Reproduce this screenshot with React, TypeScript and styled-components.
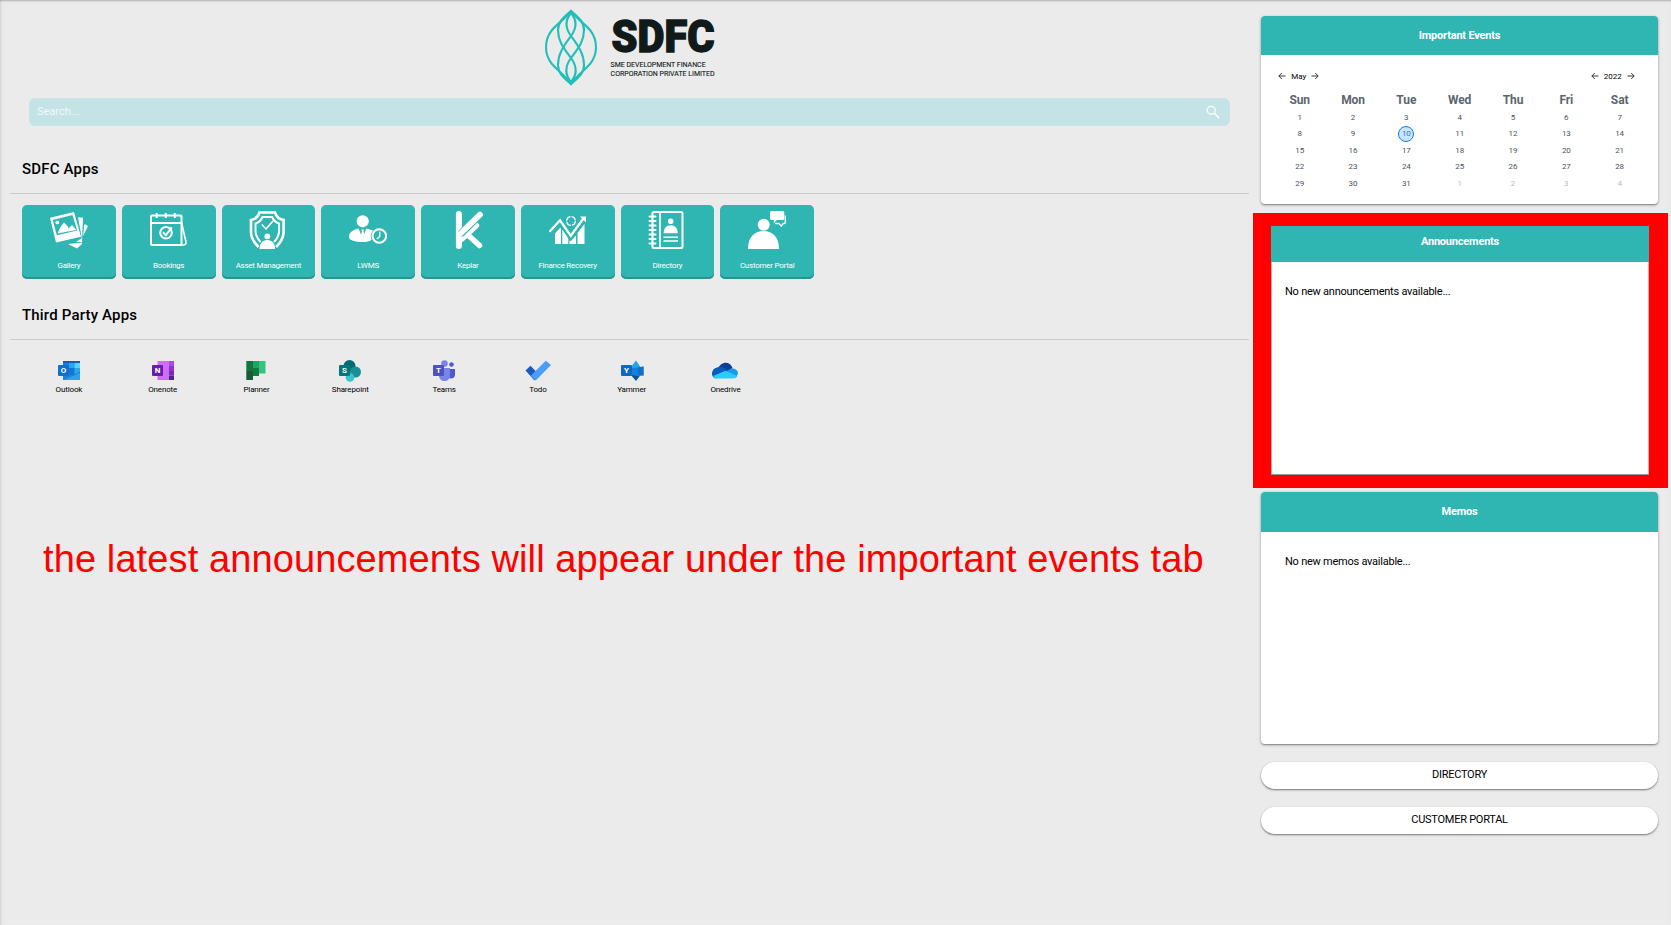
import React from "react";
import styled, { createGlobalStyle, css } from "styled-components";

const teal = "#2fb5b2";

const GlobalStyle = createGlobalStyle`
  *, *::before, *::after { box-sizing: border-box; }
  body {
    margin: 0;
    background: #ebebeb;
    font-family: Roboto, "Liberation Sans", sans-serif;
    color: #000;
    overflow: hidden;
  }
`;

const Page = styled.div`
  display: flex;
  width: 1671px;
  height: 925px;
  background: #ebebeb;
  box-shadow: inset 0 2px 2px -1px rgba(0, 0, 0, 0.25), inset 3px 0 3px -2px rgba(0, 0, 0, 0.1);
`;

const Main = styled.main`
  width: 1249px;
  padding: 10px 0 0 10px;
  display: flex;
  flex-direction: column;
`;

const LogoRow = styled.header`
  height: 88px;
  padding-left: 534px;
  svg { display: block; overflow: visible; }
`;

const SearchBar = styled.label`
  display: flex;
  align-items: center;
  justify-content: space-between;
  height: 28px;
  margin: 0 19px;
  padding: 0 9px 0 7px;
  border: 1px solid #c7e4e7;
  border-radius: 6px;
  background: #c4e3e6;
  svg { display: block; }
`;

const SearchInput = styled.input`
  flex: 1;
  border: 0;
  padding: 0 0 2px;
  outline: 0;
  background: transparent;
  font: 400 11px Roboto, sans-serif;
  &::placeholder { color: #f0f8f9; opacity: 1; }
`;

const SectionTitle = styled.h2<{ $first?: boolean }>`
  margin: 0;
  height: ${(p) => (p.$first ? 68 : 61)}px;
  padding: ${(p) => (p.$first ? 33 : 26)}px 0 0 12px;
  border-bottom: 1px solid #cbcbcb;
  font-size: 15px;
  line-height: 20px;
  font-weight: 500;
  letter-spacing: 0.18px;
`;

const AppGrid = styled.div`
  display: grid;
  grid-template-columns: repeat(8, 93.75px);
  column-gap: 6px;
  padding: 11px 0 0 12px;
`;

const AppCard = styled.a`
  display: flex;
  flex-direction: column;
  align-items: center;
  height: 74px;
  padding-top: 6px;
  border-radius: 5px;
  background: ${teal};
  box-shadow: inset 0 -2px 0 #279592;
  color: #fff;
  font-size: 8px;
  line-height: 10px;
  letter-spacing: -0.25px;
  white-space: nowrap;
  svg { display: block; margin-bottom: 12px; }
`;

const ThirdPartyRow = styled.div`
  display: grid;
  grid-template-columns: repeat(8, 93.8px);
  padding: 20px 0 0 12px;
`;

const ThirdPartyApp = styled.a`
  display: flex;
  flex-direction: column;
  align-items: center;
  font-size: 8px;
  line-height: 10px;
  letter-spacing: -0.15px;
  svg { display: block; margin-bottom: 3px; }
`;

const Note = styled.p`
  margin: 142px 0 0 33px;
  font: 400 38px/44px "Liberation Sans", Arial, sans-serif;
  letter-spacing: 0.11px;
  color: #f00;
  white-space: nowrap;
`;

const Side = styled.aside`
  width: 415px;
  margin-left: 4px;
  padding-top: 16px;
  display: flex;
  flex-direction: column;
`;

const Panel = styled.section<{ $height: number; $flat?: boolean }>`
  height: ${(p) => p.$height}px;
  margin: 0 10px 0 8px;
  border-radius: 4px;
  overflow: hidden;
  background: #fff;
  box-shadow: 0 1px 3px rgba(0, 0, 0, 0.35), 0 1px 1px rgba(0, 0, 0, 0.2);
  ${(p) =>
    p.$flat &&
    css`
      margin: 0;
      border-radius: 0;
      box-shadow: inset 0 -1px 0 #999, inset 1px 0 0 #e9a9a9, inset -1px 0 0 #e9a9a9;
    `}
`;

const PanelHeader = styled.h3<{ $height: number; $pad: number }>`
  margin: 0;
  height: ${(p) => p.$height}px;
  padding-top: ${(p) => p.$pad}px;
  background: ${teal};
  color: #fff;
  font-size: 11px;
  line-height: 14px;
  font-weight: 700;
  letter-spacing: -0.2px;
  text-align: center;
`;

const PanelText = styled.p<{ $left: number }>`
  margin: 23px 0 0 ${(p) => p.$left}px;
  font-size: 11px;
  line-height: 14px;
  letter-spacing: -0.24px;
`;

const Highlight = styled.div`
  height: 275px;
  margin: 9px 0 4px;
  padding: 13px 19px 0 18px;
  background: #f00;
`;

const CalendarNav = styled.div`
  display: flex;
  justify-content: space-between;
  padding: 15px 23px 0 17px;
  height: 35px;
`;

const Stepper = styled.div`
  display: flex;
  align-items: center;
  height: 12px;
  gap: 5.2px;
  font-size: 8px;
  svg { display: block; }
`;

const Calendar = styled.div`
  display: grid;
  grid-template-columns: repeat(7, 53.33px);
  grid-template-rows: 19px repeat(5, 16.5px);
  padding-left: 12px;
  justify-items: center;
  align-items: center;
`;

const Weekday = styled.span`
  color: #5b6670;
  font-size: 12px;
  line-height: 16px;
  font-weight: 700;
  letter-spacing: -0.1px;
`;

const Day = styled.span<{ $today?: boolean; $muted?: boolean }>`
  display: flex;
  align-items: center;
  justify-content: center;
  width: 16px;
  height: 16px;
  border-radius: 50%;
  font-size: 8px;
  letter-spacing: -0.1px;
  color: ${(p) => (p.$muted ? "#bdbdbd" : "#4a545d")};
  ${(p) =>
    p.$today &&
    css`
      color: #2b7cc4;
      background: #cce4fb;
      border: 1px solid #0a7ee6;
    `}
`;

const LinkButton = styled.button`
  height: 27px;
  margin: 18px 10px 0 8px;
  padding: 0 0 3px;
  border: 0;
  border-radius: 14px;
  background: #fff;
  box-shadow: 0 1px 2px rgba(0, 0, 0, 0.5);
  font: 400 11px Roboto, sans-serif;
  letter-spacing: -0.25px;
  color: #000;
`;

const Logo = () => (
  <svg width="180" height="78" viewBox="0 0 180 78">
    <g fill="none" stroke="#21bfb8" strokeWidth="2.1">
      <path d="M27 1C21 9 14 13 8 20 4 25 2 30 2 37.500S4 49 8 54c6 7 13 11 19 20 6-9 13-13 19-20 4-5 6-9.500 6-16.500S50 25 46 20C40 13 33 9 27 1Z" />
      <path d="M27 1C19 8 14 12 14 20c0 12 6.500 19 13 28s6 17 0 24" />
      <path d="M27 1c8 7 13 11 13 19 0 12-6.500 19-13 28s-6 17 0 24" />
      <path d="M27 74c-8-7-13-11-13-19 0-12 6.500-20 13-29s6-16 0-23" />
      <path d="M27 74c8-7 13-11 13-19 0-12-6.500-20-13-29s-6-16 0-23" />
    </g>
    <g fill="#111a1a" fontFamily="Roboto, sans-serif">
      <text x="67.500" y="42" fontSize="45" fontWeight="900" stroke="#111a1a" strokeWidth="1.400" textLength="103" lengthAdjust="spacingAndGlyphs">
        SDFC
      </text>
      <text x="66.600" y="56.700" fontSize="7.700" textLength="95" lengthAdjust="spacingAndGlyphs" stroke="#111a1a" strokeWidth="0.120">
        SME DEVELOPMENT FINANCE
      </text>
      <text x="66.600" y="65.700" fontSize="7.700" textLength="104" lengthAdjust="spacingAndGlyphs" stroke="#111a1a" strokeWidth="0.120">
        CORPORATION PRIVATE LIMITED
      </text>
    </g>
  </svg>
);

const Arrow = ({ right }: { right?: boolean }) => (
  <svg width="8" height="8" viewBox="0 0 8 8" fill="none" stroke="#222" strokeWidth="0.9">
    {right ? <path d="M.5 4h6.600M4.200 1l3 3-3 3" /> : <path d="M7.500 4H.9M3.800 1l-3 3 3 3" />}
  </svg>
);

const SearchGlyph = () => (
  <svg width="14" height="14" viewBox="0 0 14 14" fill="none" stroke="#f6fbfb" strokeWidth="1.400">
    <circle cx="5.200" cy="5.200" r="4" />
    <path d="m8.200 8.200 5 5" strokeWidth="1.800" />
  </svg>
);

const appIcons: Record<string, React.ReactNode> = {
  Gallery: (
    <>
      <path d="m28 6.200 5 .5-1 24.500-6-.2 5.800-4Z M34.500 13l3.500 2-5 10Z M18 33l14-1.200V33l-5 4.500Z" />
      <path fillRule="evenodd" d="m0 6.700 24-5.700 7 24.700-25 5.800ZM2.800 9l4 15.200 20.500-4.800L22.400 4Z" />
      <circle cx="7.300" cy="11.400" r="1.900" />
      <path d="m7.500 22.500 3-6.500 3.500-4.500 3.500 3.500 1 2.500 3.500-3.500 4.500 5Z" />
    </>
  ),
  Bookings: (
    <g fill="none" stroke="#fff" strokeWidth="2">
      <rect x="1" y="4.500" width="30.500" height="29.500" rx="1" />
      <path d="M1 12h30.500M6.700 2v5M15.800 2v5M24.800 2v5" />
      <path d="M31.500 11.500 36 31c.3 2-1 3-3 3h-6" strokeWidth="1.600" />
      <circle cx="16" cy="21.800" r="5.800" />
      <path d="m13 21.300 2.800 3 6-8" />
    </g>
  ),
  "Asset Management": (
    <>
      <g fill="none" stroke="#fff" strokeWidth="2.600">
        <path d="M9.500 36C4.500 31 2 27 2 21V9c4-.5 7-3 8.500-7.500h15.500C27.500 6 30.500 8.500 34.600 9v12c0 6-2.500 10-7.500 15" />
        <path d="M11.500 31C8 27 6.500 24 6.500 20v-7.500c3.500-1 5.500-3 7-6.500h9.600c1.500 3.500 3.500 5.500 7 6.500V20c0 4-1.500 7-5 11" strokeWidth="2" />
        <path d="m12.800 13.500 4.200 4.500 7-8" strokeWidth="1.500" />
      </g>
      <circle cx="18.300" cy="25.300" r="2.900" />
      <path d="M10.500 38c0-5.500 3-9 7.800-9s7.800 3.500 7.800 9Z" />
    </>
  ),
  LWMS: (
    <>
      <circle cx="13.700" cy="10.300" r="6.100" />
      <path d="M0 26c0-5 4-7 9.500-8.500l4.200 10 3.500-10 7 1.900A9 9 0 0 0 22.500 29c-2 1.500-5 2-9 2C6 31 0 29.500 0 26Z" />
      <path d="m12.300 18.500h2.800l-.6 2 1 4-1.800 3-1.700-3 .9-4Z" />
      <circle cx="30.300" cy="25" r="6.800" fill="none" stroke="#fff" strokeWidth="2" />
      <path d="M30.800 20.500v5l-3 2.500" fill="none" stroke="#fff" strokeWidth="1.300" />
    </>
  ),
  Keplar: (
    <g fill="none" strokeLinecap="round">
      <path d="M9.900 3v32" stroke="#fff" strokeWidth="6" />
      <path d="M13 28 27.500 14.500M19 24l11.500 10.500" stroke="#fff" strokeWidth="5.500" />
      <path d="M13 21.500 31 3.700" stroke={teal} strokeWidth="7.400" />
      <path d="M12 22 31 3.700" stroke="#fff" strokeWidth="5.800" />
    </g>
  ),
  "Finance Recovery": (
    <>
      <path d="M6 22.500l5-5.500 1 .5V33H6ZM13.300 18.500l6 9V33h-6ZM20.500 29.500l1.500.5 5-5.500V33h-6.500ZM28.500 22 35.500 13v20h-7Z" />
      <path d="M.5 20.700 11 9.300l10.800 15.500L34 8" fill="none" stroke="#fff" strokeWidth="2.300" />
      <path d="M31 5.500h6v6Z" />
      <circle cx="22" cy="10" r="4.300" fill="none" stroke="#fff" strokeWidth="1.300" strokeDasharray="5.500 1.250" />
    </>
  ),
  Directory: (
    <>
      <rect x="4.500" y="1" width="30" height="36" rx="1.500" fill="none" stroke="#fff" strokeWidth="2" />
      <path d="M12 1v36" stroke="#fff" strokeWidth="1.800" />
      <path d="M1.500 5.500h6M1.500 10h6M1.500 14.500h6M1.500 19h6M1.500 23.500h6M1.500 28h6M1.500 32.500h6" stroke="#fff" strokeWidth="2" strokeLinecap="round" />
      <circle cx="22.700" cy="10.300" r="2.800" />
      <path d="M15.700 22.200c0-5 2.500-8 7-8s7 3 7 8Z" />
      <path d="M15.500 26.300h14.500M15.500 30h14.500" stroke="#fff" strokeWidth="1.500" />
    </>
  ),
  "Customer Portal": (
    <>
      <circle cx="15.700" cy="13.700" r="6" />
      <path d="M0 38c0-11.500 6-18 15.500-18S31 26.500 31 38Z" />
      <path d="M23.500 0h11.300q1.500 0 1.500 1.500v6q0 1.500-1.500 1.500h-6l-3 3.500V9h-2.300Q22 9 22 7.500v-6Q22 0 23.500 0Z" />
      <path d="M37.300 4.500v7q0 1-1 1h-1l-2 2.500-2.500-2.500h-3.500" fill="none" stroke="#fff" strokeWidth="1.300" />
    </>
  ),
};

const Badge = ({ letter, color }: { letter: string; color: string }) => (
  <>
    <rect x="2" y="5" width="11" height="11" rx="1" fill={color} />
    <text x="7.500" y="13.300" fontSize="8" fontWeight="700" fill="#fff" textAnchor="middle" fontFamily="Roboto, sans-serif">
      {letter}
    </text>
  </>
);

const officeIcons: Record<string, React.ReactNode> = {
  Outlook: (
    <>
      <path d="M7 1h17v19H7Z" fill="#1784d9" />
      <path d="M7 1h17v2H7Z" fill="#0c63b5" />
      <path d="M7 3h6v6H7Z" fill="#1381dc" />
      <path d="M13 3h5.500v5H13Z" fill="#28a8ea" />
      <path d="M18.500 3H24v5h-5.500Z" fill="#50d9ff" />
      <path d="M13 8h5.500v6H13Z" fill="#0f78d4" />
      <path d="M18.500 8H24v5l-5.500 1Z" fill="#28a8ea" />
      <path d="m13 13.500 5 2 6-4V20Z" fill="#1466b8" />
      <path d="M24 12.500V20H8Z" fill="#2ba3ea" />
      <Badge letter="O" color="#1270cc" />
    </>
  ),
  Onenote: (
    <>
      <path d="M7.500 1H19v19H7.500Z" fill="#d06cf8" />
      <path d="M19 1h5v5h-5Z" fill="#ae4be0" />
      <path d="M19 6h5v5h-5Z" fill="#9332cf" />
      <path d="M19 11h5v4.500h-5Z" fill="#7e28bb" />
      <path d="M19 15.500h5V20h-5Z" fill="#55209b" />
      <Badge letter="N" color="#671fa6" />
    </>
  ),
  Planner: (
    <>
      <path d="M3.300 1H10v10H3.300Z" fill="#14763f" />
      <path d="M3.300 11H10v9H3.300Z" fill="#185c37" />
      <path d="M10 1h6v7h-6Z" fill="#21a366" />
      <path d="M10 8h6v8h-6Z" fill="#107c41" />
      <path d="M16 1h6.500v12.500H16Z" fill="#33c481" />
    </>
  ),
  Sharepoint: (
    <>
      <circle cx="12.500" cy="6" r="6" fill="#036c70" />
      <circle cx="18.500" cy="12" r="5.500" fill="#1a8f96" />
      <circle cx="13" cy="17.500" r="4.300" fill="#37c6d0" />
      <Badge letter="S" color="#05777c" />
    </>
  ),
  Teams: (
    <>
      <circle cx="20.500" cy="4.500" r="2.300" fill="#5059c9" />
      <circle cx="13.500" cy="3.500" r="3.300" fill="#7b83eb" />
      <path d="M16 9h8v5.500c0 2.500-1.700 4-4 4-2 0-4-1-4-4Z" fill="#5059c9" />
      <path d="M8 8h11v7c0 4-2.500 6-5.500 6S8 19 8 15Z" fill="#7b83eb" />
      <Badge letter="T" color="#4b53bc" />
    </>
  ),
  Todo: (
    <>
      <path d="M.5 10.500 5.500 5.700 12.500 13l-3 7.500Z" fill="#195abd" />
      <path d="m5.700 15.700 5 4.800L26 5 20.800.7Z" fill="#4a9df8" />
    </>
  ),
  Yammer: (
    <>
      <path d="M11.500 7.500 17 .5l4.500 6.500-5 7Z" fill="#28a4e4" />
      <path d="m11 14 6-.5 4.500 1.500L17 21Z" fill="#0954a0" />
      <path d="m13 8 6-.5 5.500-1v9l-5.500.5-6-1Z" fill="#1482dd" />
      <path d="m19 7.500 5.500-1v9l-5.500-1Z" fill="#1070c8" />
      <Badge letter="Y" color="#0f68bf" />
    </>
  ),
  Onedrive: (
    <>
      <path d="M6 9C8.500 1 18 .5 20.500 8L14 13.500Z" fill="#0b3f94" />
      <path d="M5 7.500C8 6 10 6.800 12 8l7 4.500L4 18.500C-2 17.500-1 8.500 5 7.500Z" fill="#0a5cb8" />
      <path d="M12.500 12.500 18 9c3-1.500 8 .5 8 4.500l-2 4Z" fill="#159bea" />
      <path d="m1 16 12.500-5.300L25.500 16q-1.300 2.500-4.500 2.500H5Q2.500 18.500 1 16Z" fill="#2bcbfb" />
    </>
  ),
};

const weekdays = ["Sun", "Mon", "Tue", "Wed", "Thu", "Fri", "Sat"];
const days = Array.from({ length: 35 }, (_, i) => (i < 31 ? i + 1 : i - 30));

export default function App() {
  return (
    <>
      <GlobalStyle />
      <Page>
        <Main>
          <LogoRow>
            <Logo />
          </LogoRow>
          <SearchBar>
            <SearchInput placeholder="Search..." />
            <SearchGlyph />
          </SearchBar>
          <SectionTitle $first>SDFC Apps</SectionTitle>
          <AppGrid>
            {Object.entries(appIcons).map(([name, icon]) => (
              <AppCard key={name}>
                <svg width="38" height="38" viewBox="0 0 38 38" fill="#fff">
                  {icon}
                </svg>
                {name}
              </AppCard>
            ))}
          </AppGrid>
          <SectionTitle>Third Party Apps</SectionTitle>
          <ThirdPartyRow>
            {Object.entries(officeIcons).map(([name, icon]) => (
              <ThirdPartyApp key={name}>
                <svg width="26" height="22" viewBox="0 0 26 22">
                  {icon}
                </svg>
                {name}
              </ThirdPartyApp>
            ))}
          </ThirdPartyRow>
          <Note>the latest announcements will appear under the important events tab</Note>
        </Main>
        <Side>
          <Panel $height={188}>
            <PanelHeader $height={39} $pad={13}>
              Important Events
            </PanelHeader>
            <CalendarNav>
              <Stepper>
                <Arrow />
                May
                <Arrow right />
              </Stepper>
              <Stepper>
                <Arrow />
                2022
                <Arrow right />
              </Stepper>
            </CalendarNav>
            <Calendar>
              {weekdays.map((d) => (
                <Weekday key={d}>{d}</Weekday>
              ))}
              {days.map((d, i) => (
                <Day key={i} $today={i === 9} $muted={i > 30}>
                  {d}
                </Day>
              ))}
            </Calendar>
          </Panel>
          <Highlight>
            <Panel $height={249} $flat>
              <PanelHeader $height={36} $pad={9}>
                Announcements
              </PanelHeader>
              <PanelText $left={14}>No new announcements available...</PanelText>
            </Panel>
          </Highlight>
          <Panel $height={252}>
            <PanelHeader $height={40} $pad={13}>
              Memos
            </PanelHeader>
            <PanelText $left={24}>No new memos available...</PanelText>
          </Panel>
          <LinkButton>DIRECTORY</LinkButton>
          <LinkButton>CUSTOMER PORTAL</LinkButton>
        </Side>
      </Page>
    </>
  );
}
